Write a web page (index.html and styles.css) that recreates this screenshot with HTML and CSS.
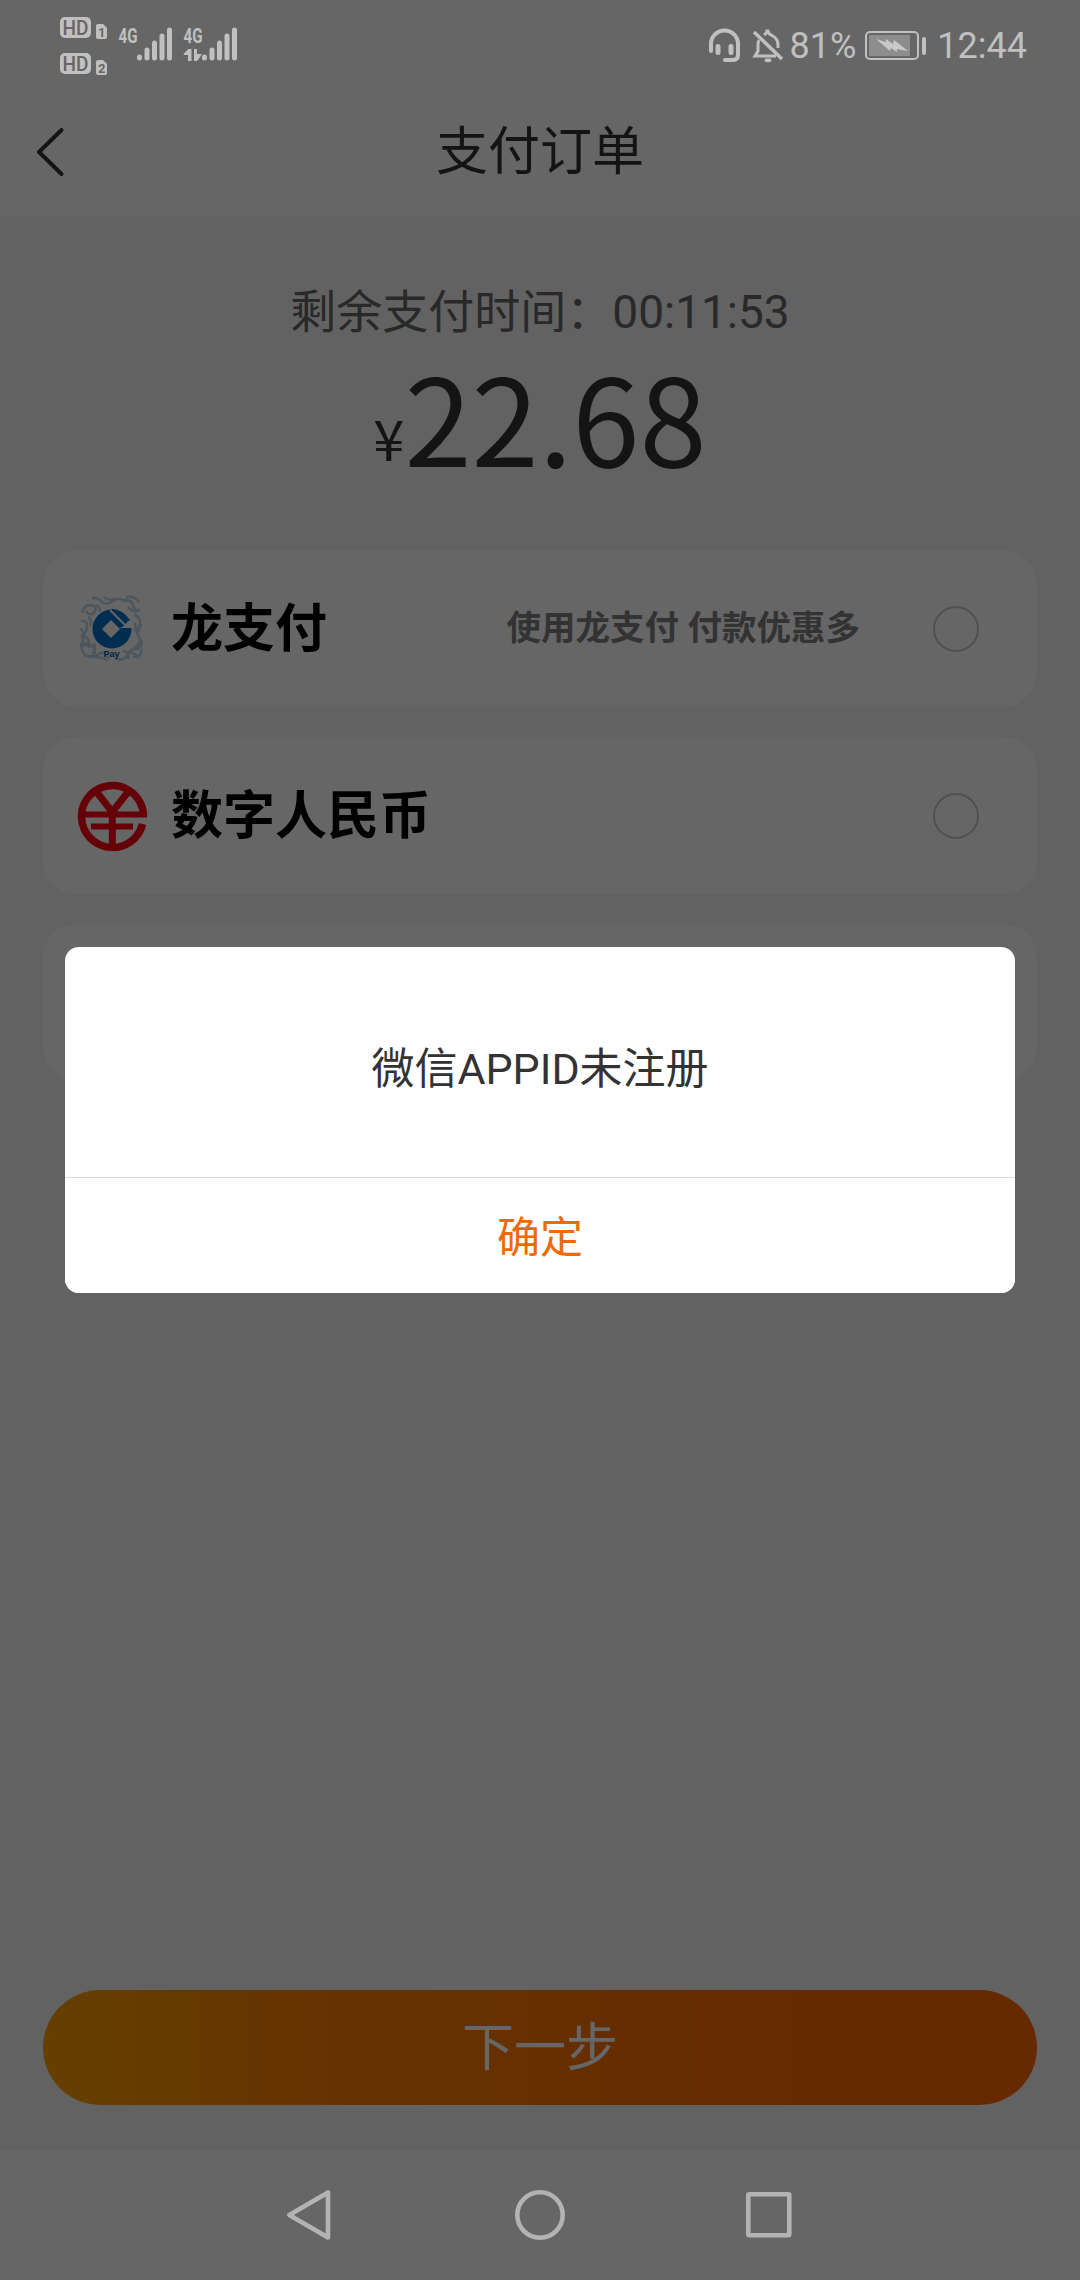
FILE: index.html
```html
<!DOCTYPE html>
<html lang="zh-CN">
<head>
    <meta charset="UTF-8">
    <meta name="viewport" content="width=device-width, initial-scale=1.0">
    <title>支付订单</title>
    <link rel="stylesheet" href="styles.css">
</head>
<body>
    <div class="phone">
        <!-- 状态栏 -->
        <div class="status-bar">
            <svg class="status-left" width="190" height="64" viewBox="0 0 190 64">
                <rect x="0" y="2" width="31" height="21" rx="5" fill="#c0c0c0"/>
                <rect x="0" y="38" width="31" height="21" rx="5" fill="#c0c0c0"/>
                <text class="hd" x="2.500" y="19.500" textLength="26" lengthAdjust="spacingAndGlyphs">HD</text>
                <text class="hd" x="2.500" y="55.500" textLength="26" lengthAdjust="spacingAndGlyphs">HD</text>
                <path d="M38 9h5l4 4v9q0 2-2 2h-7q-2 0-2-2V11q0-2 2-2z" fill="#c0c0c0"/>
                <path d="M38 45h5l4 4v9q0 2-2 2h-7q-2 0-2-2V47q0-2 2-2z" fill="#c0c0c0"/>
                <text class="sim" x="38" y="21.500">1</text>
                <text class="sim" x="38" y="57.500">2</text>
                <text class="net" x="58.500" y="27.500" textLength="19" lengthAdjust="spacingAndGlyphs">4G</text>
                <text class="net" x="123.500" y="27.500" textLength="19" lengthAdjust="spacingAndGlyphs">4G</text>
                <g stroke="#c0c0c0" stroke-width="5" stroke-linecap="round">
                    <path d="M79.500 42v1M87 35v8M94.500 28v15M102 21v22M109.500 15v28"/>
                    <path d="M144.500 42v1M152 35v8M159.500 28v15M167 21v22M174.500 15v28"/>
                </g>
                <path d="M131.500 46h-3.500v-6h-4.500q0-1.500 5-6h3zM134 34h3v5h4.500q0 1.500-4.500 7h-3z" fill="#c0c0c0"/>
            </svg>
            <div class="status-right">
                <svg width="34" height="36" viewBox="0 0 34 36" fill="none" stroke="#c0c0c0" stroke-width="4">
                    <path d="M3 23v-7a13 13 0 0 1 27 0v11q0 5-5 5h-8" stroke-linecap="round"/>
                    <path d="M10 18.500v6M23 18.500v6" stroke-width="5" stroke-linecap="round"/>
                </svg>
                <svg width="32" height="36" viewBox="0 0 32 36" fill="none" stroke="#c0c0c0" stroke-width="3">
                    <path d="M7 12q-1 2-1 5v6l-3 5h21M12 7q3-2 3-4h1q0 3 4 4.500q6 3 6 9.500v3"/>
                    <path d="M2 4l28 27" stroke-width="3.500"/>
                    <path d="M13 32h6l-3 1z"/>
                </svg>
                <span class="battery-num">81%</span>
                <svg class="battery" width="62" height="32" viewBox="0 0 62 32">
                    <rect x="1" y="2" width="52" height="27" rx="4" fill="none" stroke="#c0c0c0" stroke-width="2"/>
                    <rect x="4" y="5" width="41" height="21" fill="#8d8d8d"/>
                    <rect x="57" y="7" width="4" height="18" rx="2" fill="#c0c0c0"/>
                    <path d="M11 9l10 3v-3l7 5 1-4 14 11-11-2v3l-6-4-1 3z" fill="#c8c8c8"/>
                </svg>
                <span class="clock">12:44</span>
            </div>
        </div>

        <!-- 标题栏 -->
        <div class="header">
            <svg class="back" width="30" height="62" viewBox="0 0 30 62" fill="none" stroke="#333" stroke-width="4" stroke-linecap="round" stroke-linejoin="round">
                <path d="M26.500 8L4 30l22.500 22"/>
            </svg>
            <h1 class="title">支付订单</h1>
        </div>

        <div class="content">
            <div class="countdown">剩余支付时间：00:11:53</div>
            <div class="amount"><span class="yen">¥</span>22.68</div>

            <div class="pay-list">
                <div class="pay-item">
                    <svg class="pay-icon" width="72" height="72" viewBox="0 0 72 72">
                        <g fill="none" stroke="#7fb2d8" stroke-width="2.500" opacity=".5">
                            <path d="M6 20q2-9 9-8t3 8q-6 3-8-2M16 6q5-3 9 2t10 1 9-3 8 2M28 4q6 5 12 1M46 8q9-3 11 4t7 5M52 14q6 7 11 3M58 22q7 2 6 9t-3 10M50 4q9-1 13 5"/>
                            <path d="M5 28q7-1 6 6t-6 9q8 0 8 8M4 36q5 2 3 9t8 9M6 54q3-6 9-2t3 9M8 62q9 3 15-1t10 5M5 50q0 14 12 14t14 4"/>
                            <path d="M66 32q-8 4-4 10t-1 11-8 5M65 46q3 9-6 10t-7 10M40 66q8 2 11-4t12 3M47 58q6 1 6 8M66 56q-1 9-9 8"/>
                            <path d="M12 24q5 3 2 9M20 12q5 2 4 7M18 50q3 7-2 11M56 28q5 3 3 10"/>
                        </g>
                        <circle cx="36" cy="36" r="19.500" fill="#0070c8"/>
                        <path d="M37 16q7 0 17 11l-5 6-16-16z" fill="#0070c8"/>
                        <path d="M42 36l6-3 4-5 6-1v8H46z" fill="#fff"/>
                        <path d="M34 17l16 16" stroke="#fff" stroke-width="2"/>
                        <path d="M35 27l9 9-9 9-9-9z" fill="#fff"/>
                        <text class="pay-logo" x="27.500" y="64">Pay</text>
                    </svg>
                    <span class="pay-name">龙支付</span>
                    <span class="pay-tip">使用龙支付 付款优惠多</span>
                    <span class="radio"></span>
                </div>
                <div class="pay-item">
                    <svg class="pay-icon" width="72" height="72" viewBox="0 0 72 72" fill="none" stroke="#ff0014" stroke-width="6">
                        <path d="M67.500 36A31 31 0 1 0 66.600 44" stroke-width="7.500"/>
                        <path d="M5 34.500h66M15 46.500h42"/>
                        <path d="M36.300 32v35M19 10l17.300 22L53.500 10" stroke-width="7"/>
                    </svg>
                    <span class="pay-name">数字人民币</span>
                    <span class="radio"></span>
                </div>
                <div class="pay-item"></div>
            </div>

            <button class="next-btn">下一步</button>
        </div>

        <!-- 导航栏 -->
        <div class="nav-bar">
            <svg width="54" height="54" viewBox="0 0 54 54"><path d="M45 4.500v45L6.300 27z"/></svg>
            <svg width="54" height="54" viewBox="0 0 54 54"><circle cx="27" cy="27" r="22.700"/></svg>
            <svg width="54" height="54" viewBox="0 0 54 54"><rect x="5.300" y="6.300" width="41" height="41" rx="1"/></svg>
        </div>

        <div class="mask">
            <div class="dialog">
                <div class="dialog-text">微信APPID未注册</div>
                <button class="dialog-btn">确定</button>
            </div>
        </div>
    </div>
</body>
</html>
```
FILE: styles.css
```css
* {
    margin: 0;
    padding: 0;
    box-sizing: border-box;
}

body {
    background: #fff;
    font-family: Roboto, "Noto Sans CJK SC", sans-serif;
}

button {
    border: none;
    font-family: inherit;
    cursor: pointer;
}

.phone {
    position: relative;
    width: 1080px;
    height: 2280px;
    display: flex;
    flex-direction: column;
    overflow: hidden;
}

/* 系统栏图标在遮罩之上 */
.status-bar,
.nav-bar {
    position: relative;
    z-index: 3;
}

.status-bar {
    height: 90px;
    padding: 15px 53px 0 60px;
    display: flex;
    justify-content: space-between;
    color: #c0c0c0;
}

.hd {
    font: 500 20px Roboto, sans-serif;
    fill: #666;
}

.sim {
    font: bold 13px Roboto, sans-serif;
    fill: #666;
}

.net {
    font: bold 21px Roboto, sans-serif;
    fill: #c0c0c0;
}

.status-right {
    height: 62px;
    display: flex;
    align-items: center;
    font-size: 36px;
}

.status-right svg + svg {
    margin-left: 10px;
}

.battery-num {
    margin-left: 6px;
}

.battery {
    margin: 0 10px 0 9px;
}

.header {
    height: 126px;
    display: grid;
    grid-template-columns: 100px 1fr 100px;
    align-items: center;
}

.back {
    margin-left: 35px;
}

.title {
    grid-column: 2;
    padding-bottom: 12px;
    text-align: center;
    font-size: 52px;
    font-weight: 400;
    color: #333;
}

.content {
    height: 1934px;
    padding: 61px 43px 45px;
    background: #f5f5f5;
    display: flex;
    flex-direction: column;
}

.countdown {
    height: 70px;
    line-height: 70px;
    text-align: center;
    font-size: 46px;
    color: #666;
}

.amount {
    height: 203px;
    line-height: 135px;
    text-align: center;
    font-family: "Noto Sans CJK SC", sans-serif;
    font-size: 121px;
    color: #333;
}

.yen {
    font-size: 56px;
    line-height: 1;
    vertical-align: 6px;
}

.pay-list {
    display: flex;
    flex-direction: column;
    gap: 30px;
}

.pay-item {
    height: 157px;
    padding: 0 58px 0 33px;
    background: #fff;
    border-radius: 34px;
    display: flex;
    align-items: center;
}

.pay-name {
    margin-left: 23px;
    padding-bottom: 8px;
    font-size: 52px;
    font-weight: 700;
    color: #000;
}

.pay-logo {
    font: bold 9px "Liberation Sans", sans-serif;
    fill: #0058a0;
}

.pay-tip {
    margin-left: auto;
    margin-right: 73px;
    padding-bottom: 8px;
    font-size: 34.5px;
    font-weight: 700;
    color: #808080;
}

.radio {
    width: 46px;
    height: 46px;
    border: 2px solid #c8c8c8;
    border-radius: 50%;
}

.pay-name + .radio {
    margin-left: auto;
}

.next-btn {
    height: 115px;
    margin-top: auto;
    padding-bottom: 8px;
    border-radius: 58px;
    background: linear-gradient(to right, #ffa000, #ff8400 24%, #ff6600 85%);
    color: #fff;
    font-size: 52px;
}

.nav-bar {
    height: 130px;
    padding: 0 283px;
    display: flex;
    align-items: center;
    justify-content: space-between;
}

.nav-bar svg {
    fill: none;
    stroke: #b3b3b3;
    stroke-width: 4.6;
    stroke-linejoin: round;
}

.mask {
    position: absolute;
    top: 0;
    left: 0;
    width: 100%;
    height: 100%;
    z-index: 2;
    padding-top: 947px;
    background: rgba(0, 0, 0, 0.6);
}

.dialog {
    width: 950px;
    margin: 0 auto;
    background: #fff;
    border-radius: 14px;
    overflow: hidden;
}

.dialog-text {
    height: 230px;
    display: flex;
    align-items: center;
    justify-content: center;
    padding-top: 6px;
    font-size: 43px;
    color: #333;
}

.dialog-btn {
    display: block;
    width: 100%;
    height: 116px;
    padding-bottom: 3px;
    border-top: 1px solid #d5dada;
    background: #fff;
    font-size: 43px;
    color: #ee6a08;
}
```
